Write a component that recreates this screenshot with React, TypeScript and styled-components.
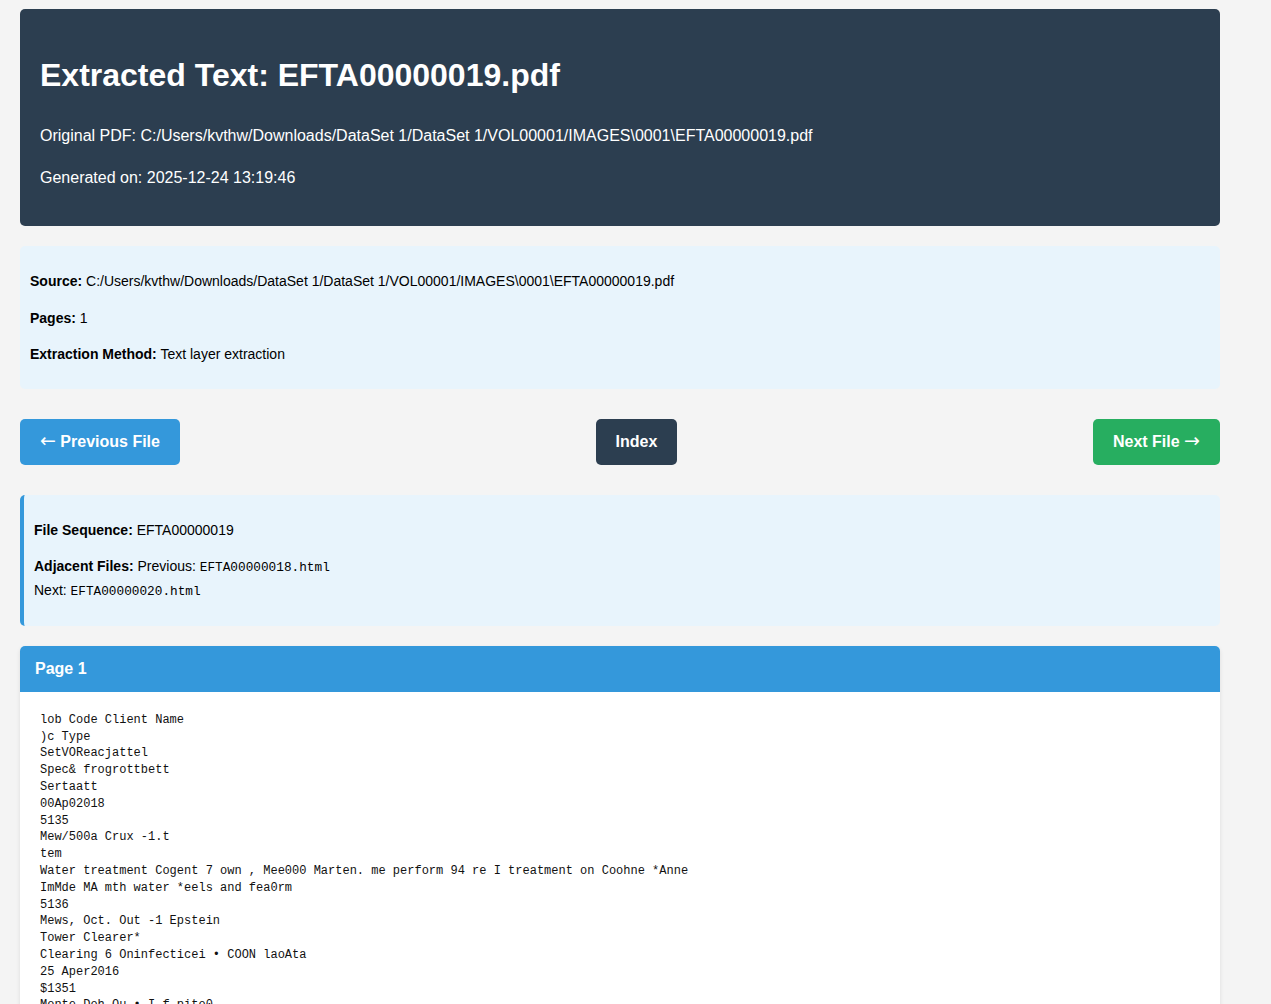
import styled, { createGlobalStyle } from 'styled-components'

const GlobalStyle = createGlobalStyle`
    body {
        margin: 0;
        padding: 9px 20px 20px;
        max-width: 1200px;
        background: #f4f4f4;
        color: #222;
        font-family: "Liberation Sans", Arial, sans-serif;
        line-height: 1.6;
    }
`

const Header = styled.header`
    background: #2c3e50;
    color: #fff;
    padding: 20px;
    border-radius: 5px;
    margin-bottom: 20px;

    h1 {
        font-size: 32px;
        margin: 21.44px 0;
    }

    p {
        margin: 16px 0;
    }
`

const InfoBox = styled.section<{ $accent?: boolean }>`
    background: #e8f4fc;
    padding: 10px;
    border-radius: 5px;
    font-size: 14px;
    color: #000;
    border-left: ${p => (p.$accent ? '4px solid #3498db' : 'none')};

    p {
        margin: 14px 0;
    }
`

const Mono = styled.code`
    font-family: "Liberation Mono", "Courier New", monospace;
    font-size: 12.75px;
`

const Nav = styled.nav`
    display: flex;
    justify-content: space-between;
    margin: 30px 0;
`

const NavButton = styled.a<{ $bg: string }>`
    display: inline-block;
    padding: 10px 20px;
    height: 25.6px;
    background: ${p => p.$bg};
    color: #fff;
    font-weight: bold;
    text-decoration: none;
    border-radius: 5px;
`

// arrows come from DejaVu, the sans face has only tiny ones
const Arrow = styled.span`
    font-family: "DejaVu Sans", sans-serif;
    font-weight: normal;
    font-size: 19px;
    line-height: 1;
`

const PageCard = styled.article`
    margin-top: 20px;
    background: #fff;
    border-radius: 5px;
    box-shadow: 0 2px 4px rgba(0, 0, 0, 0.1);
    overflow: hidden;
`

const PageTitle = styled.div`
    background: #3498db;
    color: #fff;
    padding: 10px 15px;
    font-weight: bold;
`

const PageText = styled.pre`
    margin: 0;
    padding: 20px;
    font-family: "Liberation Mono", "Courier New", monospace;
    font-size: 12px;
    line-height: 1.4;
    color: #111;
    white-space: pre-wrap;
`

const sourcePath = 'C:/Users/kvthw/Downloads/DataSet 1/DataSet 1/VOL00001/IMAGES\\0001\\EFTA00000019.pdf'

const pageLines = [
    'lob Code Client Name',
    ')c Type',
    'SetVOReacjattel',
    'Spec& frogrottbett',
    'Sertaatt',
    '00Ap02018',
    '5135',
    'Mew/500a Crux -1.t',
    'tem',
    'Water treatment Cogent 7 own , Mee000 Marten. me perform 94 re I treatment on Coohne *Anne',
    'ImMde MA mth water *eels and fea0rm',
    '5136',
    'Mews, Oct. Out -1 Epstein',
    'Tower Clearer*',
    'Clearing 6 Oninfecticei \u2022 COON laoAta',
    '25 Aper2016',
    '$1351',
    'Monte Doh Ou \u2022 I f pito0',
    'Service',
]

export default function App() {
    return (
        <>
            <GlobalStyle />
            <Header>
                <h1>Extracted Text: EFTA00000019.pdf</h1>
                <p>Original PDF: {sourcePath}</p>
                <p>Generated on: 2025-12-24 13:19:46</p>
            </Header>

            <InfoBox>
                <p><strong>Source:</strong> {sourcePath}</p>
                <p><strong>Pages:</strong> 1</p>
                <p><strong>Extraction Method:</strong> Text layer extraction</p>
            </InfoBox>

            <Nav>
                <NavButton href="#" $bg="#3498db"><Arrow>&larr;</Arrow> Previous File</NavButton>
                <NavButton href="#" $bg="#2c3e50">Index</NavButton>
                <NavButton href="#" $bg="#27ae60">Next File <Arrow>&rarr;</Arrow></NavButton>
            </Nav>

            <InfoBox $accent>
                <p><strong>File Sequence:</strong> EFTA00000019</p>
                <p>
                    <strong>Adjacent Files:</strong> Previous: <Mono>EFTA00000018.html</Mono>
                    <br />Next: <Mono>EFTA00000020.html</Mono>
                </p>
            </InfoBox>

            <PageCard>
                <PageTitle>Page 1</PageTitle>
                <PageText>{pageLines.join('\n')}</PageText>
            </PageCard>
        </>
    )
}
